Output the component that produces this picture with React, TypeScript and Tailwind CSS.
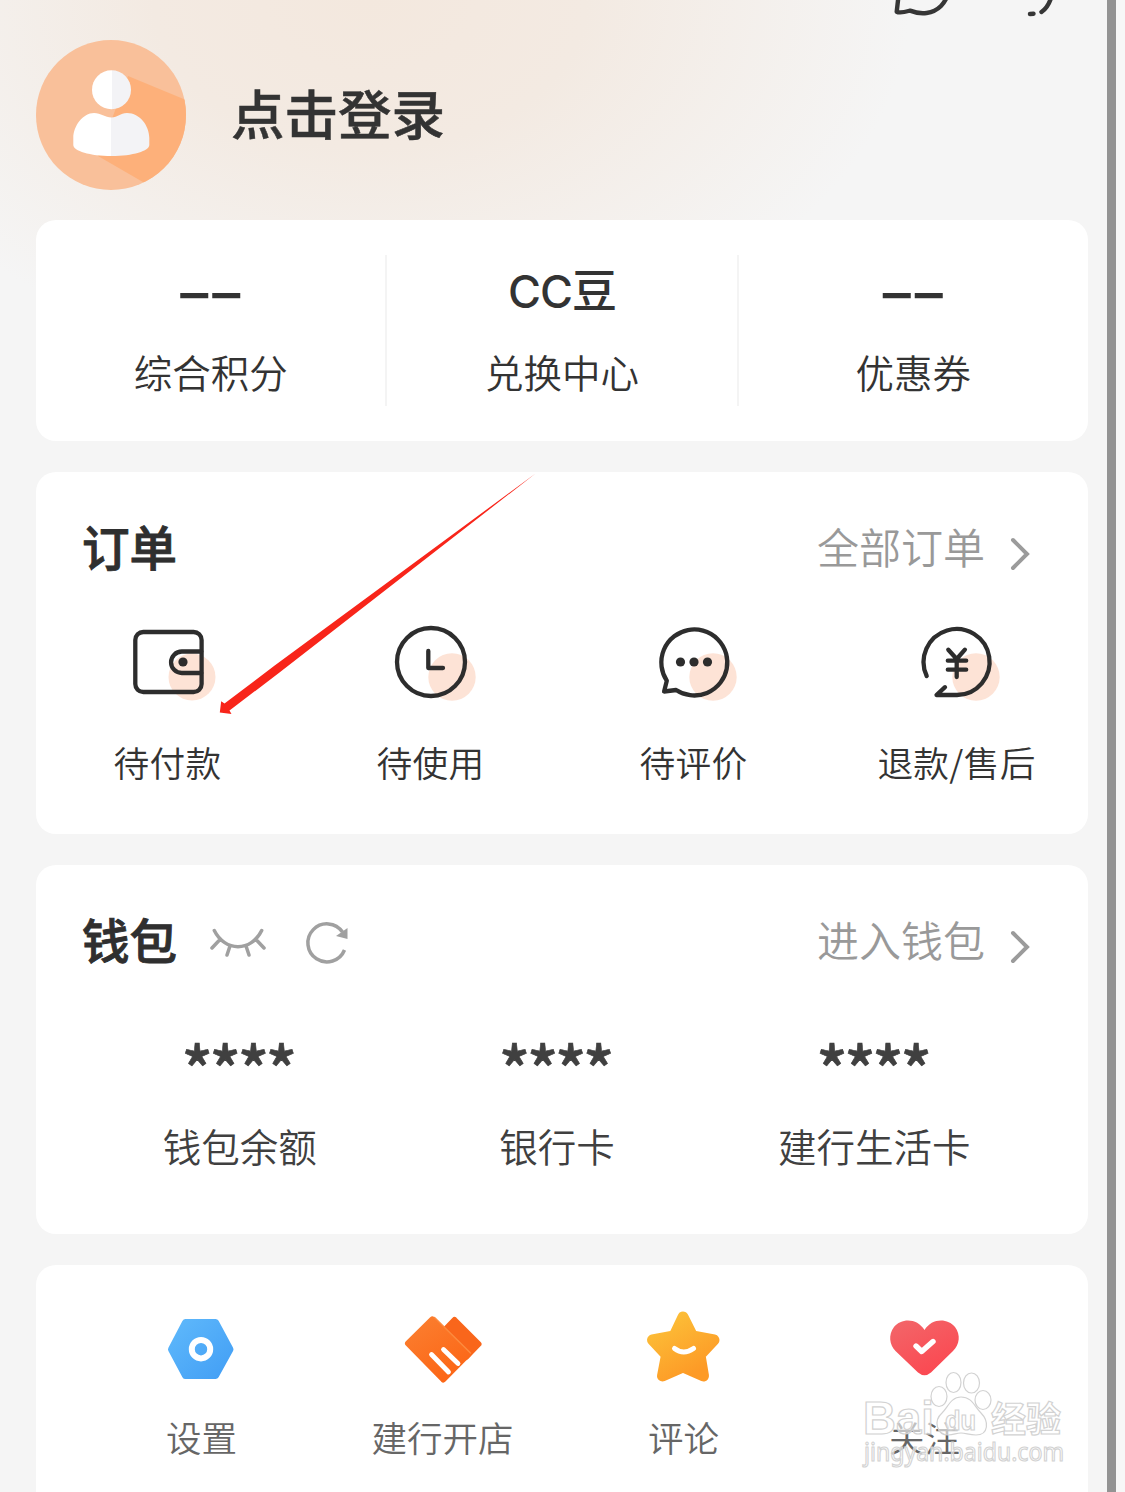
import type { ReactNode } from 'react';

type Entry = { label: string; icon: ReactNode };

const peach = '#fde3d6';
const ink = '#2d2d2d';

const orders: Entry[] = [
  {
    label: '待付款',
    icon: (
      <>
        <circle cx="79.5" cy="67" r="23.5" fill={peach} stroke="none" />
        <rect x="22.8" y="22" width="66.3" height="60" rx="8" />
        <path d="M88.8 41.5H69.3a10.75 10.75 0 0 0 0 21.5h19.5" />
        <circle cx="70.5" cy="52" r="4.6" fill={ink} stroke="none" />
      </>
    ),
  },
  {
    label: '待使用',
    icon: (
      <>
        <circle cx="76.5" cy="67" r="23.7" fill={peach} stroke="none" />
        <circle cx="55.5" cy="52" r="34" />
        <path d="M52.8 41v17h14.7" />
      </>
    ),
  },
  {
    label: '待评价',
    icon: (
      <>
        <circle cx="74.5" cy="67" r="23.7" fill={peach} stroke="none" />
        <path d="M37.6 80A33 33 0 1 0 28.3 70.7L25.6 81.5Z" />
        <g fill={ink} stroke="none">
          <circle cx="42" cy="52" r="4.6" />
          <circle cx="55.5" cy="52" r="4.6" />
          <circle cx="69" cy="52" r="4.6" />
        </g>
      </>
    ),
  },
  {
    label: '退款/售后',
    icon: (
      <>
        <circle cx="74.5" cy="67" r="23.7" fill={peach} stroke="none" />
        <path d="M25.2 66A33 33 0 1 1 55.5 85H35L43.5 77.2" />
        <path d="M46.8 39.7L55.2 49L63.4 39.7M55.2 49V67M46.3 50.7H64.7M46.3 59.7H64.7" />
      </>
    ),
  },
];

const services: Entry[] = [
  {
    label: '设置',
    icon: (
      <>
        <path d="M28.5 17.5h30L73 44.3 58.5 70.5H28.5L14.5 44.3z" fill="url(#blue)" stroke="url(#blue)" strokeWidth="7" strokeLinejoin="round" />
        <circle cx="44" cy="44.2" r="9.2" fill="none" stroke="#fff" strokeWidth="6" />
      </>
    ),
  },
  {
    label: '建行开店',
    icon: (
      <>
        <path d="M56.5 15L80.5 39 68 52 44 28z" fill="#f9661b" stroke="#f9661b" strokeWidth="6" strokeLinejoin="round" />
        <path d="M34.3 14.5L70 49.5 45.3 74.5 10 38.5z" fill="url(#orange)" stroke="url(#orange)" strokeWidth="6" strokeLinejoin="round" />
        <path d="M36.5 12.5L72.500 48" stroke="#fd8a3e" strokeWidth="1.5" strokeLinecap="round" />
        <path d="M33.500 49.500L50.500 67M45.500 44.5L60 58.5" stroke="#fff" strokeWidth="4.8" strokeLinecap="round" />
      </>
    ),
  },
  {
    label: '评论',
    icon: (
      <>
        <path
          d="M44 12L53.5 31 75 35 61 50 64.5 71 44 62 23.5 71 27.5 50 13.5 35 35 31z"
          fill="url(#gold)"
          stroke="url(#gold)"
          strokeWidth="11"
          strokeLinejoin="round"
        />
        <path d="M35.5 43.5Q44.5 50.5 54.5 43.5" fill="none" stroke="#fff" strokeWidth="5" strokeLinecap="round" />
      </>
    ),
  },
  {
    label: '关注',
    icon: (
      <>
        <path
          d="M44.500 25C37.500 13 21.500 12.5 14 22C8 30 9.500 39.5 15.500 46L38 67.5Q44.500 73 51 67.5L73 46C79.500 39.5 81 30 75 22C67.500 12.5 51.500 13 44.500 25z"
          fill="url(#red)"
        />
        <path d="M36 41L41.7 46.5L53 36.5" fill="none" stroke="#fff" strokeWidth="5.4" strokeLinecap="round" strokeLinejoin="round" />
      </>
    ),
  },
];

const points = [
  { value: '––', label: '综合积分' },
  { value: 'CC豆', label: '兑换中心' },
  { value: '––', label: '优惠券' },
];

const wallet = ['钱包余额', '银行卡', '建行生活卡'];

function Gradients() {
  return (
    <svg width="0" height="0" className="absolute">
      <defs>
        <linearGradient id="blue" x1="0" y1="0" x2="1" y2="1">
          <stop offset="0" stopColor="#5eb8fb" />
          <stop offset="1" stopColor="#439ff5" />
        </linearGradient>
        <linearGradient id="orange" x1="0" y1="0" x2="0.6" y2="1">
          <stop offset="0" stopColor="#fb7f30" />
          <stop offset="1" stopColor="#fc6717" />
        </linearGradient>
        <linearGradient id="gold" x1="0" y1="0" x2="0.6" y2="1">
          <stop offset="0" stopColor="#fcc33a" />
          <stop offset="1" stopColor="#fd9a26" />
        </linearGradient>
        <linearGradient id="red" x1="0" y1="0" x2="0.6" y2="1">
          <stop offset="0" stopColor="#f2676a" />
          <stop offset="1" stopColor="#fb4851" />
        </linearGradient>
      </defs>
    </svg>
  );
}

function Avatar() {
  return (
    <svg width="150" height="150" viewBox="0 0 150 150">
      <defs>
        <clipPath id="disc">
          <circle cx="75" cy="75" r="75" />
        </clipPath>
        <linearGradient id="body" x1="0" x2="1">
          <stop offset="0.5" stopColor="#fff" />
          <stop offset="0.5" stopColor="#f3f3f6" />
        </linearGradient>
      </defs>
      <g clipPath="url(#disc)">
        <rect width="150" height="150" fill="#f9c09a" />
        <path d="M92 36L160 64V160H138L62 116z" fill="#fdb07a" />
      </g>
      <circle cx="75.5" cy="49.7" r="19.5" fill="url(#body)" />
      <path
        d="M75.5 77.5C82 77.5 84 73 91 73C104 73 113.3 86 113.3 98V105C113.3 111 97 116 75.5 116S37.3 111 37.3 105V98C37.3 86 47 73 58 73C65 73 69 77.5 75.5 77.5z"
        fill="url(#body)"
      />
    </svg>
  );
}

function TopIcons() {
  return (
    <svg width="180" height="24" viewBox="0 0 180 24" fill="none" stroke="#363636" strokeWidth="4.4" strokeLinecap="round" strokeLinejoin="round" className="absolute top-0 left-[885px]">
      <path d="M13.5-4L11.7 11.7C15 13.5 20 12 25 10.6C36 15 48 14 56 6Q59 3 62-3" />
      <path d="M145 14L148.5 13.7M156.5 12Q163 7.5 166-2" />
    </svg>
  );
}

function CardHeader({ title, more, children }: { title: string; more: string; children?: ReactNode }) {
  return (
    <div className="flex h-[60px] items-center pl-[46px] pr-[58px]">
      <h2 className="-mt-1 text-[47.5px] font-medium leading-[60px] text-[#2f2f2f] [-webkit-text-stroke:0.9px]">{title}</h2>
      {children}
      <span className="-mt-1 ml-auto text-[42px] font-[350] leading-[60px] text-[#999]">{more}</span>
      <svg width="20" height="36" viewBox="0 0 20 36" fill="none" stroke="#9b9b9b" strokeWidth="4" strokeLinecap="round" className="ml-[25px] mt-[11px]">
        <path d="M3 4L17 18L3 32" />
      </svg>
    </div>
  );
}

function Watermark() {
  return (
    <svg width="215" height="110" viewBox="0 0 215 110" fill="#fff" fillOpacity="0.6" stroke="#d2d2d2" strokeWidth="1.2" className="absolute left-[855px] top-[1366px]">
      <ellipse cx="84" cy="30.5" rx="8" ry="10" />
      <ellipse cx="98.5" cy="16.5" rx="7.5" ry="10" />
      <ellipse cx="116.5" cy="17" rx="8" ry="10" />
      <ellipse cx="128" cy="34" rx="8" ry="9.5" />
      <path d="M106 31C96 31 93 41 87 47C78 55 82 69 93 69C99 69 101 67 106 67S114 69 121 69C134 69 134 55 126 47C119 40 117 31 106 31z" />
      <text x="8" y="68" fontSize="46" textLength="71" lengthAdjust="spacingAndGlyphs" fontWeight="bold" fontFamily="Liberation Sans, sans-serif">Bai</text>
      <text x="90" y="64" fontSize="28" textLength="31" lengthAdjust="spacingAndGlyphs" fontWeight="bold" fontFamily="Liberation Sans, sans-serif">du</text>
      <text x="136" y="66" fontSize="35" textLength="70" fontWeight="bold" fontFamily="Noto Sans CJK SC, sans-serif">经验</text>
      <text x="9" y="95" fontSize="26" textLength="200" lengthAdjust="spacingAndGlyphs" fontFamily="Noto Sans, sans-serif">jingyan.baidu.com</text>
    </svg>
  );
}

export default function App() {
  return (
    <div className="relative flex h-[1492px] w-[1125px] overflow-hidden bg-[#f5f5f5] font-['Noto_Sans_CJK_SC',sans-serif] text-[#333]">
      <Gradients />
      <div className="w-[1107px] shrink-0 bg-[radial-gradient(ellipse_540px_370px_at_370px_0px,#f3e8de_0%,#f3eae2_40%,#f5f5f5_100%)] bg-no-repeat pl-9">
        <TopIcons />
        <header className="flex h-[220px] items-center pb-[30px] pt-10">
          <Avatar />
          <h1 className="ml-[45px] mt-[-7px] text-[53.5px] font-medium leading-[70px] [-webkit-text-stroke:0.5px]">点击登录</h1>
        </header>

        <section className="flex h-[221px] w-[1052px] rounded-[20px] bg-white pt-[35px]">
          {points.map((item, i) => (
            <div key={item.label} className={`h-[151px] flex-1 pt-[5px] text-center ${i > 0 ? 'border-l-2 border-[#f4f4f4]' : ''}`}>
              <div
                className={`h-[60px] font-['Inter','Noto_Sans_CJK_SC',sans-serif] font-medium ${
                  item.value === '––' ? 'pl-[3px] text-[56px] leading-[67px] tracking-[4px]' : 'text-[45px] leading-[64px] tracking-[-1px]'
                }`}
              >
                {item.value}
              </div>
              <div className="mt-[26px] text-[38.5px] font-[350] leading-[50px]">{item.label}</div>
            </div>
          ))}
        </section>

        <section className="mt-[31px] h-[362px] w-[1052px] rounded-[20px] bg-white pt-[46px]">
          <CardHeader title="订单" more="全部订单" />
          <div className="mt-8 grid grid-cols-4">
            {orders.map(item => (
              <div key={item.label} className="flex flex-col items-center">
                <svg width="110" height="100" viewBox="0.5 0 110 100" fill="none" stroke={ink} strokeWidth="4.3" strokeLinecap="round" strokeLinejoin="round">
                  {item.icon}
                </svg>
                <span className="mt-[27px] whitespace-nowrap text-[35.7px] font-[350] leading-[50px] tracking-[0.3px]">{item.label}</span>
              </div>
            ))}
          </div>
        </section>

        <section className="mt-[31px] h-[369px] w-[1052px] rounded-[20px] bg-white pt-[46px]">
          <CardHeader title="钱包" more="进入钱包">
            <svg width="60" height="36" viewBox="0 0 60 36" fill="none" stroke="#a0a0a0" strokeWidth="3.5" strokeLinecap="round" className="ml-[31px] mt-0.5">
              <path d="M6.3 6.5C17 28 43 28 53.7 6.5M12 15.5L4 24M22 22L19 31M38 22L41 31M48 15.5L56 24" />
            </svg>
            <svg width="46" height="46" viewBox="0 0 46 46" fill="none" stroke="#a0a0a0" strokeWidth="3.5" className="ml-9 mt-1">
              <path d="M40.5 30A19 19 0 1 1 38.5 12" />
              <path d="M43.500 8V19L32 16z" fill="#a0a0a0" stroke="none" />
            </svg>
          </CardHeader>
          <div className="ml-[45px] mt-[60px] grid w-[952px] grid-cols-3 text-center">
            {wallet.map(label => (
              <div key={label}>
                <div className="h-[60px] pr-1 text-[65px] font-medium leading-[73px] tracking-[-3.4px] text-[#404040] [-webkit-text-stroke:0.6px]">****</div>
                <div className="mt-[29px] text-[38.5px] font-[350] leading-[50px] text-[#404040]">{label}</div>
              </div>
            ))}
          </div>
        </section>

        <section className="mt-[31px] h-[240px] w-[1052px] rounded-t-[20px] bg-white pt-10">
          <div className="ml-[45px] grid w-[964px] grid-cols-4">
            {services.map(item => (
              <div key={item.label} className="flex flex-col items-center text-[#666]">
                <svg width="88" height="85" viewBox="1 0 88 85">
                  {item.icon}
                </svg>
                <span className="mt-[22px] text-[35.5px] font-[350] leading-[50px]">{item.label}</span>
              </div>
            ))}
          </div>
        </section>
      </div>
      <div className="w-[9px] shrink-0 bg-[#939393]" />
      <div className="flex-1 bg-[#f7f7f7]" />

      {/* pointer towards the unpaid orders */}
      <svg width="330" height="250" viewBox="0 0 330 250" className="absolute left-[212px] top-[468px]">
        <path d="M323.5 5.5L62 198L12.5 235.5L9.2 233.2L7.8 244.5L19.5 246L17.5 242.5L67.5 204.5z" fill="#f8251a" />
      </svg>
      <Watermark />
    </div>
  );
}
